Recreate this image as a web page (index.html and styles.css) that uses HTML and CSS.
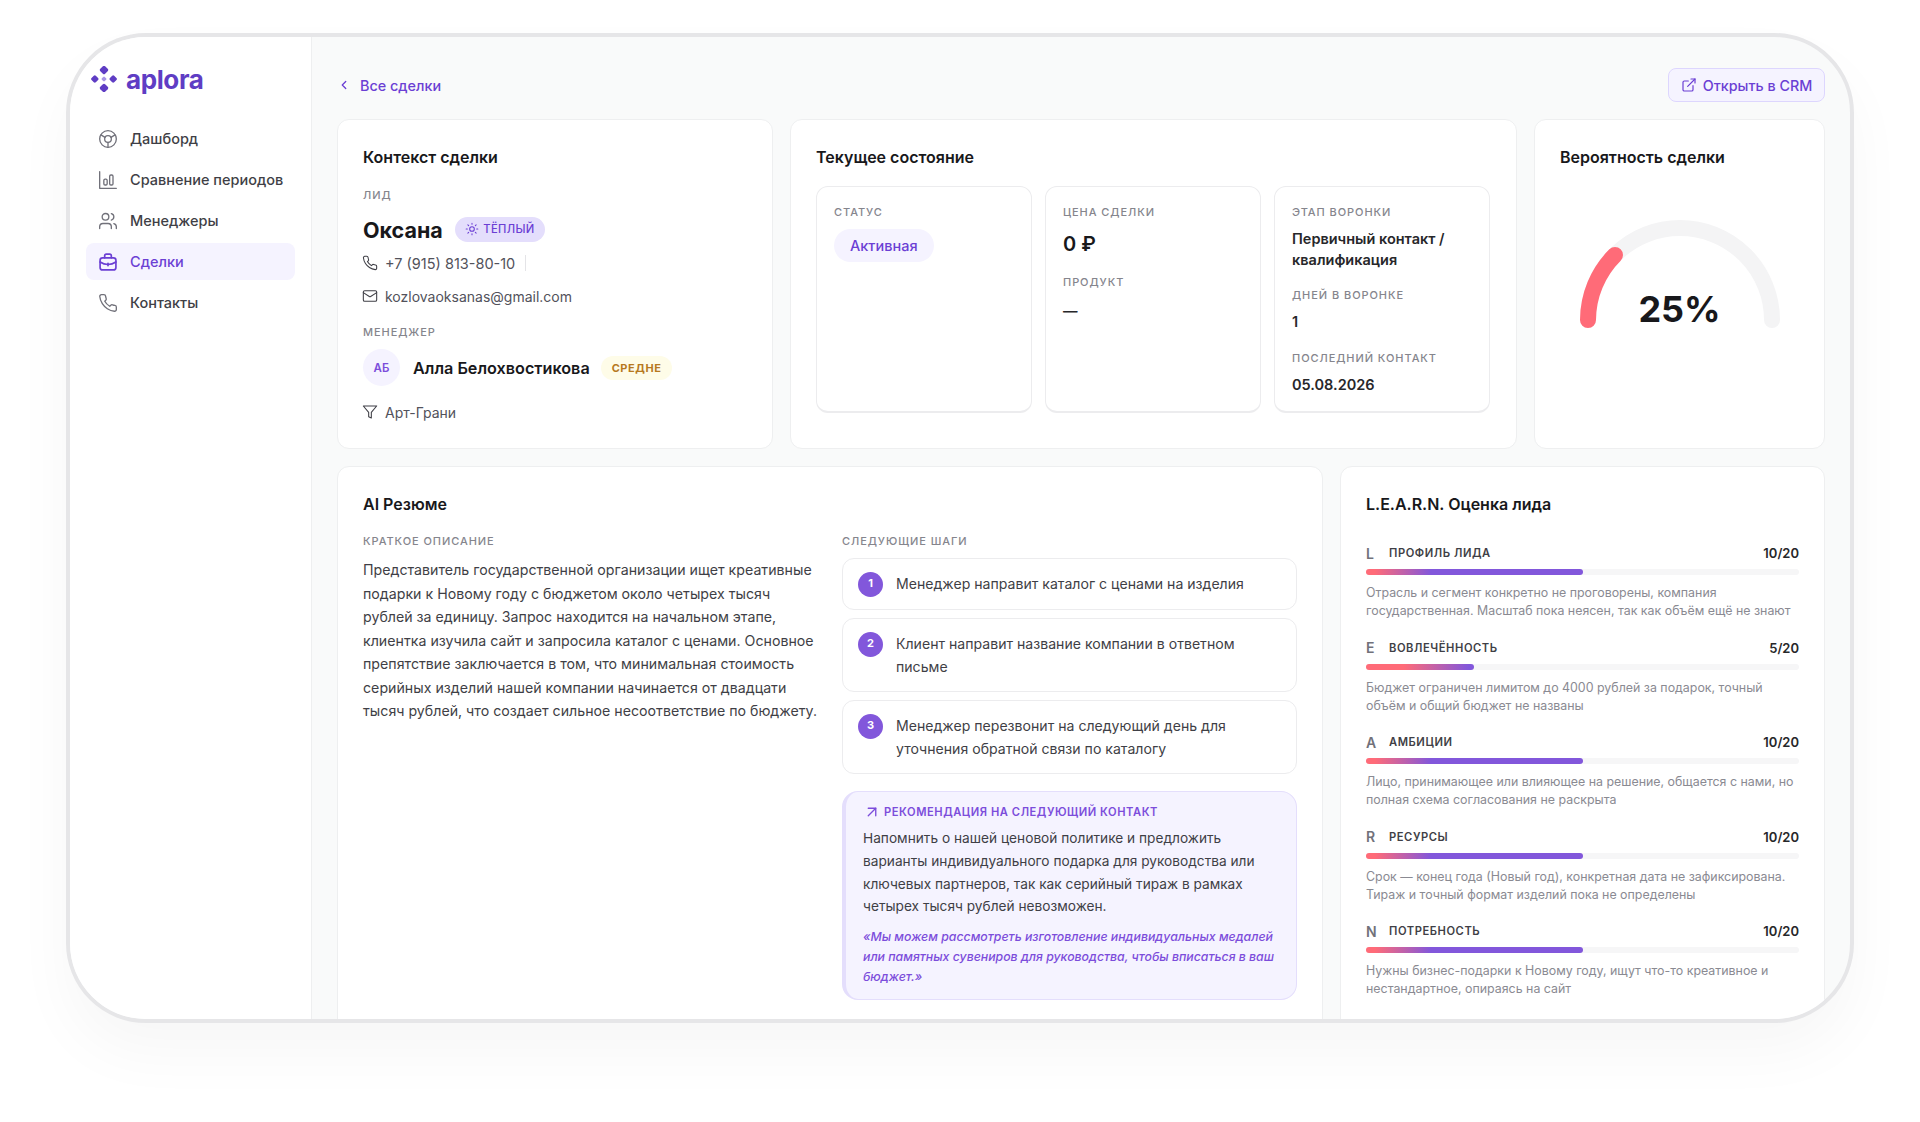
FILE: index.html
```html
<!DOCTYPE html>
<html lang="ru">
  <head>
    <meta charset="UTF-8" />
    <meta name="viewport" content="width=device-width, initial-scale=1.0" />
    <title>Сделка</title>

    <link rel="stylesheet" href="styles.css">
  </head>
  <body>
    <div class="frame">
      <aside class="sidebar">
        <div class="logo">
          <svg class="logo-mark" viewBox="0 0 26 26" width="26" height="26">
            <rect x="9.6" y="0.6" width="6.8" height="6.8" rx="1.6" transform="rotate(45 13 4)" fill="#5f3dc4"/>
            <rect x="9.6" y="18.6" width="6.8" height="6.8" rx="1.6" transform="rotate(45 13 22)" fill="#5f3dc4"/>
            <rect x="0.8" y="10" width="6" height="6" rx="1.4" transform="rotate(45 3.8 13)" fill="#5f3dc4"/>
            <rect x="19.2" y="10" width="6" height="6" rx="1.4" transform="rotate(45 22.2 13)" fill="#5f3dc4"/>
            <rect x="11" y="11" width="4" height="4" rx="1" transform="rotate(45 13 13)" fill="#a996e6"/>
          </svg>
          <span class="logo-text">aplora</span>
        </div>
        <nav class="nav">
          <a class="nav-item">
            <svg class="icon-nav" viewBox="0 0 24 24"><circle cx="12" cy="12" r="10"/><circle cx="12" cy="12" r="4"/><path d="M12 16v6M8.5 10 3.5 7M15.5 10l5-3"/></svg>
            Дашборд
          </a>
          <a class="nav-item">
            <svg class="icon-nav" viewBox="0 0 24 24"><path d="M2 2v20h20"/><rect x="7" y="11" width="4" height="7" rx="1.5"/><rect x="14" y="6" width="4" height="12" rx="1.5"/></svg>
            Сравнение периодов
          </a>
          <a class="nav-item">
            <svg class="icon-nav" viewBox="0 0 24 24"><path d="M16 21v-2a4 4 0 0 0-4-4H6a4 4 0 0 0-4 4v2"/><circle cx="9" cy="7" r="4"/><path d="M22 21v-2a4 4 0 0 0-3-3.87"/><path d="M16 3.13a4 4 0 0 1 0 7.75"/></svg>
            Менеджеры
          </a>
          <a class="nav-item active">
            <svg class="icon-nav" viewBox="0 0 24 24"><rect x="2.5" y="7" width="19" height="14.5" rx="3"/><path d="M8 7V4.5a2 2 0 0 1 2-2h4a2 2 0 0 1 2 2V7"/><path d="M2.5 12c3 2 6 3 9.5 3s6.5-1 9.5-3"/><path d="M12 13.5v3"/></svg>
            Сделки
          </a>
          <a class="nav-item">
            <svg class="icon-nav" viewBox="0 0 24 24"><path d="M22 16.92v3a2 2 0 0 1-2.18 2 19.79 19.79 0 0 1-8.63-3.07 19.5 19.5 0 0 1-6-6 19.79 19.79 0 0 1-3.07-8.67A2 2 0 0 1 4.11 2h3a2 2 0 0 1 2 1.72 12.84 12.84 0 0 0 .7 2.81 2 2 0 0 1-.45 2.11L8.09 9.91a16 16 0 0 0 6 6l1.27-1.27a2 2 0 0 1 2.11-.45 12.84 12.84 0 0 0 2.81.7A2 2 0 0 1 22 16.92z"/></svg>
            Контакты
          </a>
        </nav>
      </aside>

      <main class="main">
        <div class="topbar">
          <a class="back">
            <svg class="icon-back" viewBox="0 0 24 24"><path d="m15 18-6-6 6-6"/></svg>
            Все сделки
          </a>
          <a class="crm-btn">
            <svg class="icon-crm" viewBox="0 0 24 24"><path d="M18 13v6a2 2 0 0 1-2 2H5a2 2 0 0 1-2-2V8a2 2 0 0 1 2-2h6"/><path d="M15 3h6v6"/><path d="M10 14 21 3"/></svg>
            Открыть в CRM
          </a>
        </div>

        <div class="row-top">
          <section class="card">
            <h2 class="card-title">Контекст сделки</h2>
            <div class="label lead-label">Лид</div>
            <div class="lead-name">
              <span class="name">Оксана</span>
              <span class="pill-warm">
                <svg class="icon-sun" viewBox="0 0 24 24"><circle cx="12" cy="12" r="4"/><path d="M12 2v2M12 20v2M4.9 4.9l1.4 1.4M17.7 17.7l1.4 1.4M2 12h2M20 12h2M6.3 17.7l-1.4 1.4M19.1 4.9l-1.4 1.4"/></svg>
                Тёплый
              </span>
            </div>
            <div class="contact phone">
              <svg class="icon-small" viewBox="0 0 24 24"><path d="M22 16.92v3a2 2 0 0 1-2.18 2 19.79 19.79 0 0 1-8.63-3.07 19.5 19.5 0 0 1-6-6 19.79 19.79 0 0 1-3.07-8.67A2 2 0 0 1 4.11 2h3a2 2 0 0 1 2 1.72 12.84 12.84 0 0 0 .7 2.81 2 2 0 0 1-.45 2.11L8.09 9.91a16 16 0 0 0 6 6l1.27-1.27a2 2 0 0 1 2.11-.45 12.84 12.84 0 0 0 2.81.7A2 2 0 0 1 22 16.92z"/></svg>
              +7 (915) 813-80-10
              <span class="divider"></span>
            </div>
            <div class="contact">
              <svg class="icon-small" viewBox="0 0 24 24"><rect x="2" y="4" width="20" height="16" rx="2"/><path d="m22 7-8.97 5.7a1.94 1.94 0 0 1-2.06 0L2 7"/></svg>
              kozlovaoksanas@gmail.com
            </div>
            <div class="label manager-label">Менеджер</div>
            <div class="manager">
              <span class="avatar">АБ</span>
              <span class="manager-name">Алла Белохвостикова</span>
              <span class="pill-mid">Средне</span>
            </div>
            <div class="contact company">
              <svg class="icon-small" viewBox="0 0 24 24"><path d="M22 3H2l8 9.46V19l4 2v-8.54L22 3z"/></svg>
              Арт-Грани
            </div>
          </section>

          <section class="card">
            <h2 class="card-title">Текущее состояние</h2>
            <div class="state-grid">
              <div class="state-box">
                <div class="label">Статус</div>
                <span class="pill-status">Активная</span>
              </div>
              <div class="state-box">
                <div class="label">Цена сделки</div>
                <div class="price">0 ₽</div>
                <div class="label product-label">Продукт</div>
                <div class="value dash">—</div>
              </div>
              <div class="state-box">
                <div class="label">Этап воронки</div>
                <div class="value stage">Первичный контакт / квалификация</div>
                <div class="label days-label">Дней в воронке</div>
                <div class="value one">1</div>
                <div class="label last-label">Последний контакт</div>
                <div class="value one">05.08.2026</div>
              </div>
            </div>
          </section>

          <section class="card">
            <h2 class="card-title">Вероятность сделки</h2>
            <div class="gauge">
              <svg viewBox="0 0 200 116" width="200" height="116">
                <path d="M8 108 A92 92 0 0 1 192 108" fill="none" stroke="#f4f4f5" stroke-width="16" stroke-linecap="round"/>
                <path d="M8 108 A92 92 0 0 1 35 43" fill="none" stroke="#ff6b78" stroke-width="16" stroke-linecap="round"/>
              </svg>
              <div class="gauge-value">25%</div>
            </div>
          </section>
        </div>

        <div class="row-bottom">
          <section class="card ai-card">
            <h2 class="card-title">AI Резюме</h2>
            <div class="ai-cols">
              <div class="ai-left">
                <div class="label">Краткое описание</div>
                <p class="summary">Представитель государственной организации ищет креативные подарки к Новому году с бюджетом около четырех тысяч рублей за единицу. Запрос находится на начальном этапе, клиентка изучила сайт и запросила каталог с ценами. Основное препятствие заключается в том, что минимальная стоимость серийных изделий нашей компании начинается от двадцати тысяч рублей, что создает сильное несоответствие по бюджету.</p>
              </div>
              <div class="ai-right">
                <div class="label">Следующие шаги</div>
                <div class="steps">
                  <div class="step"><span class="step-num">1</span><span>Менеджер направит каталог с ценами на изделия</span></div>
                  <div class="step"><span class="step-num">2</span><span>Клиент направит название компании в ответном письме</span></div>
                  <div class="step"><span class="step-num">3</span><span>Менеджер перезвонит на следующий день для уточнения обратной связи по каталогу</span></div>
                </div>
                <div class="rec">
                  <div class="rec-head">
                    <svg class="icon-arrow" viewBox="0 0 24 24"><path d="M7 7h10v10"/><path d="M7 17 17 7"/></svg>
                    Рекомендация на следующий контакт
                  </div>
                  <p class="rec-text">Напомнить о нашей ценовой политике и предложить варианты индивидуального подарка для руководства или ключевых партнеров, так как серийный тираж в рамках четырех тысяч рублей невозможен.</p>
                  <p class="rec-quote">«Мы можем рассмотреть изготовление индивидуальных медалей или памятных сувениров для руководства, чтобы вписаться в ваш бюджет.»</p>
                </div>
              </div>
            </div>
          </section>

          <section class="card learn-card">
            <h2 class="card-title">L.E.A.R.N. Оценка лида</h2>
            <div class="learn-list">
              <div class="learn-item">
                <div class="learn-head"><span class="learn-letter">L</span><span class="learn-name">Профиль лида</span><span class="learn-score">10/20</span></div>
                <div class="track"><div class="fill half" style="width: 50%"></div></div>
                <p class="learn-desc">Отрасль и сегмент конкретно не проговорены, компания государственная. Масштаб пока неясен, так как объём ещё не знают</p>
              </div>
              <div class="learn-item">
                <div class="learn-head"><span class="learn-letter">E</span><span class="learn-name">Вовлечённость</span><span class="learn-score">5/20</span></div>
                <div class="track"><div class="fill quarter" style="width: 25%"></div></div>
                <p class="learn-desc">Бюджет ограничен лимитом до 4000 рублей за подарок, точный объём и общий бюджет не названы</p>
              </div>
              <div class="learn-item">
                <div class="learn-head"><span class="learn-letter">A</span><span class="learn-name">Амбиции</span><span class="learn-score">10/20</span></div>
                <div class="track"><div class="fill half" style="width: 50%"></div></div>
                <p class="learn-desc">Лицо, принимающее или влияющее на решение, общается с нами, но полная схема согласования не раскрыта</p>
              </div>
              <div class="learn-item">
                <div class="learn-head"><span class="learn-letter">R</span><span class="learn-name">Ресурсы</span><span class="learn-score">10/20</span></div>
                <div class="track"><div class="fill half" style="width: 50%"></div></div>
                <p class="learn-desc">Срок — конец года (Новый год), конкретная дата не зафиксирована. Тираж и точный формат изделий пока не определены</p>
              </div>
              <div class="learn-item">
                <div class="learn-head"><span class="learn-letter">N</span><span class="learn-name">Потребность</span><span class="learn-score">10/20</span></div>
                <div class="track"><div class="fill half" style="width: 50%"></div></div>
                <p class="learn-desc">Нужны бизнес-подарки к Новому году, ищут что-то креативное и нестандартное, опираясь на сайт</p>
              </div>
            </div>
          </section>
        </div>
      </main>
    </div>
  </body>
</html>
```

FILE: styles.css
```css
* {
  margin: 0;
  padding: 0;
  box-sizing: border-box;
}

body {
  height: 1122px;
  padding: 33px 66px 0;
  overflow: hidden;
  background-color: #fff;
  font-family: Inter, "Noto Sans", sans-serif;
  color: #18181b;
}

svg {
  flex-shrink: 0;
  fill: none;
  stroke: currentColor;
  stroke-linecap: round;
  stroke-linejoin: round;
}

.frame {
  display: flex;
  height: 990px;
  overflow: hidden;
  background-color: #f9fafa;
  border: 4px solid #e6e6e8;
  border-radius: 80px;
  box-shadow: 0 30px 60px rgba(0, 0, 0, 0.035);
}

/* sidebar */
.sidebar {
  flex: 0 0 242px;
  padding: 25px 16px 0;
  background-color: #fff;
  border-right: 1px solid #eeeff0;
}

.logo {
  display: flex;
  align-items: center;
  gap: 9px;
  height: 34px;
  padding-left: 5px;
  margin-bottom: 24px;
}

.logo-mark {
  stroke: none;
}

.logo-text {
  font-size: 26px;
  font-weight: 700;
  letter-spacing: -0.4px;
  color: #5f3dc4;
}

.nav {
  display: flex;
  flex-direction: column;
  gap: 4px;
}

.nav-item {
  display: flex;
  align-items: center;
  gap: 12px;
  height: 37px;
  padding-left: 12px;
  border-radius: 8px;
  font-size: 14.5px;
  font-weight: 500;
  color: #3f3f46;
}

.nav-item.active {
  background-color: #f5f3ff;
  color: #6b3fd4;
}

.icon-nav {
  width: 20px;
  height: 20px;
  stroke-width: 1.6;
  color: #71717a;
}

.active .icon-nav {
  color: #6b3fd4;
  stroke-width: 2;
}

/* main */
.main {
  flex: 1;
  min-width: 0;
  padding: 31px 25px 0;
}

.topbar {
  display: flex;
  align-items: center;
  justify-content: space-between;
  height: 34px;
  margin-bottom: 17px;
}

.back {
  display: flex;
  align-items: center;
  gap: 9px;
  font-size: 14.4px;
  font-weight: 500;
  color: #6b3fd4;
}

.icon-back {
  width: 14px;
  height: 14px;
  stroke-width: 2.2;
}

.crm-btn {
  display: flex;
  align-items: center;
  justify-content: center;
  gap: 6px;
  width: 157px;
  height: 34px;
  background-color: #f5f3ff;
  border: 1px solid #ddd6fe;
  border-radius: 8px;
  font-size: 14.3px;
  font-weight: 500;
  color: #6b3fd4;
}

.icon-crm {
  width: 16px;
  height: 16px;
  stroke-width: 1.8;
}

.row-top {
  display: grid;
  grid-template-columns: 436px 727px 291px;
  gap: 17px;
  height: 329px;
  margin-bottom: 18px;
}

.row-bottom {
  display: grid;
  grid-template-columns: 986px 485px;
  gap: 17px;
}

.card {
  padding: 26px 25px;
  background-color: #fff;
  border: 1px solid #eeeff0;
  border-radius: 12px;
}

.card-title {
  font-size: 16px;
  font-weight: 600;
  line-height: 22px;
  color: #18181b;
}

.label {
  font-size: 11px;
  font-weight: 500;
  line-height: 14px;
  letter-spacing: 0.085em;
  text-transform: uppercase;
  color: #85858d;
}

/* context */
.lead-label {
  margin-top: 20px;
}

.lead-name {
  display: flex;
  align-items: center;
  gap: 12px;
  margin-top: 11px;
}

.name {
  font-size: 21.5px;
  font-weight: 700;
  line-height: 34px;
}

.pill-warm {
  display: flex;
  align-items: center;
  gap: 4px;
  height: 25px;
  padding: 0 10.5px;
  margin-top: -2px;
  background-color: #e4defc;
  border-radius: 13px;
  font-size: 11.2px;
  font-weight: 500;
  letter-spacing: 0.03em;
  text-transform: uppercase;
  color: #6b3fd4;
}

.icon-sun {
  width: 14px;
  height: 14px;
  stroke-width: 1.8;
}

.contact {
  display: flex;
  align-items: center;
  gap: 7px;
  height: 20px;
  margin-top: 13px;
  font-size: 14px;
  color: #52525b;
}

.phone {
  font-size: 14.5px;
}

.lead-name + .contact {
  margin-top: 6px;
}

.icon-small {
  width: 16px;
  height: 16px;
  margin-left: -1px;
  stroke-width: 1.6;
  color: #3f3f46;
}

.divider {
  width: 1px;
  height: 16px;
  margin-left: 3px;
  background-color: #e4e4e7;
}

.manager-label {
  margin-top: 19px;
}

.manager {
  display: flex;
  align-items: center;
  margin-top: 10px;
}

.avatar {
  display: flex;
  align-items: center;
  justify-content: center;
  width: 37px;
  height: 37px;
  margin-right: 13px;
  background-color: #f5f3ff;
  border-radius: 50%;
  font-size: 11.5px;
  font-weight: 600;
  color: #7c4ddb;
}

.manager-name {
  margin-right: 11px;
  font-size: 16.2px;
  font-weight: 600;
}

.pill-mid {
  display: flex;
  align-items: center;
  height: 24px;
  padding: 0 11px;
  background-color: #fefce8;
  border-radius: 12px;
  font-size: 11px;
  font-weight: 700;
  letter-spacing: 0.05em;
  text-transform: uppercase;
  color: #b7791f;
}

.company {
  margin-top: 16px;
}

/* state */
.state-grid {
  display: grid;
  grid-template-columns: repeat(3, 216px);
  gap: 13px;
  height: 227px;
  margin-top: 18px;
}

.state-box {
  padding: 18px 17px 6px;
  border: 1px solid #ececee;
  border-bottom-width: 2px;
  border-radius: 12px;
}

.pill-status {
  display: inline-flex;
  align-items: center;
  height: 33px;
  padding: 0 16px;
  margin-top: 10px;
  background-color: #f5f3ff;
  border-radius: 17px;
  font-size: 14.5px;
  font-weight: 500;
  color: #6b3fd4;
}

.price {
  margin-top: 11px;
  font-size: 20px;
  font-weight: 600;
  line-height: 28px;
}

.value {
  font-size: 14.5px;
  font-weight: 600;
  line-height: 21px;
  color: #27272a;
}

.product-label {
  margin-top: 17px;
}

.dash {
  margin-top: 11px;
}

.stage {
  margin-top: 9px;
}

.days-label {
  margin-top: 18px;
}

.one {
  margin-top: 9px;
}

.last-label {
  margin-top: 19px;
}

/* gauge */
.gauge {
  position: relative;
  display: flex;
  justify-content: center;
  margin-top: 44px;
}

.gauge-value {
  position: absolute;
  left: 0;
  right: 0;
  top: 74px;
  font-size: 36px;
  font-weight: 700;
  line-height: 46px;
  text-align: center;
}

/* ai */
.ai-card {
  height: 620px;
}

.ai-cols {
  display: grid;
  grid-template-columns: 455px 455px;
  gap: 24px;
  margin-top: 19px;
}

.summary {
  margin-top: 10px;
  font-size: 14.2px;
  line-height: 23.5px;
  color: #3f3f46;
}

.steps {
  display: flex;
  flex-direction: column;
  gap: 8px;
  margin-top: 10px;
}

.step {
  display: flex;
  gap: 13px;
  padding: 12.5px 15px;
  border: 1px solid #ececee;
  border-radius: 12px;
  font-size: 14.1px;
  line-height: 23.6px;
  color: #3f3f46;
}

.step-num {
  display: flex;
  flex-shrink: 0;
  align-items: center;
  justify-content: center;
  width: 25px;
  height: 25px;
  background-color: #8257db;
  border-radius: 50%;
  font-size: 11px;
  font-weight: 700;
  color: #fff;
}

.rec {
  height: 209px;
  margin-top: 17px;
  padding: 12px 17px;
  background-color: #f5f3ff;
  border: 1px solid #e4defc;
  border-left-width: 4px;
  border-radius: 16px;
}

.rec-head {
  display: flex;
  align-items: center;
  gap: 3px;
  height: 16px;
  font-size: 11.15px;
  font-weight: 600;
  line-height: 16px;
  letter-spacing: 0.05em;
  text-transform: uppercase;
  color: #7c4ddb;
}

.icon-arrow {
  width: 18px;
  height: 18px;
  stroke-width: 1.8;
}

.rec-text {
  margin-top: 7px;
  font-size: 13.7px;
  line-height: 22.7px;
  color: #3f3f46;
}

.rec-quote {
  margin-top: 9px;
  font-size: 12.3px;
  font-style: italic;
  font-weight: 500;
  line-height: 20px;
  color: #7c4ddb;
}

/* learn */
.learn-card {
  height: 620px;
}

.learn-list {
  display: flex;
  flex-direction: column;
  gap: 14px;
  margin-top: 29px;
}

.learn-item {
  height: 80.6px;
}

.learn-head {
  display: flex;
  align-items: center;
  height: 18px;
}

.learn-letter {
  width: 23px;
  font-size: 14px;
  font-weight: 600;
  color: #71717a;
}

.learn-name {
  font-size: 11.2px;
  font-weight: 600;
  letter-spacing: 0.05em;
  text-transform: uppercase;
  color: #3f3f46;
}

.learn-score {
  margin-left: auto;
  font-size: 13px;
  font-weight: 600;
  color: #27272a;
}

.track {
  height: 6px;
  margin-top: 7px;
  background-color: #f6f6f7;
  border-radius: 3px;
}

.fill {
  height: 100%;
  border-radius: 3px;
}

.fill.half {
  background-image: linear-gradient(90deg, #ff6b78 4%, #8257db 30%);
}

.fill.quarter {
  background-image: linear-gradient(90deg, #ff6b78 35%, #8257db 95%);
}

.learn-desc {
  margin-top: 9px;
  font-size: 12.4px;
  line-height: 18px;
  color: #8a8a92;
}
```
